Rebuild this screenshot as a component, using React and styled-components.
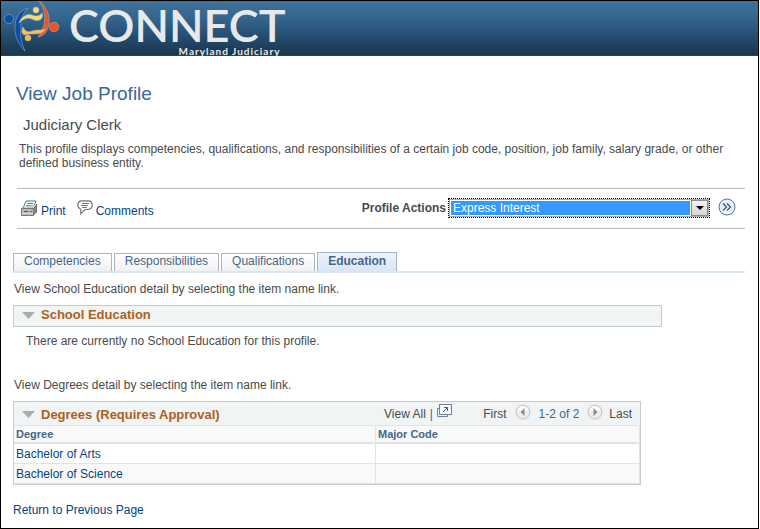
import React, { useState } from 'react';
import styled, { createGlobalStyle } from 'styled-components';

const GlobalStyle = createGlobalStyle`
  * {
    box-sizing: border-box;
  }

  body {
    margin: 0;
    background: #fff;
    color: #4a4a4a;
    font-family: "Liberation Sans", Arial, sans-serif;
    font-size: 12px;
    line-height: 14px;
  }
`;

const tabs = ['Competencies', 'Responsibilities', 'Qualifications', 'Education'];

const degrees = [
  { name: 'Bachelor of Arts', majorCode: '' },
  { name: 'Bachelor of Science', majorCode: '' },
];

const LogoMark = () => (
  <svg width="60" height="54" viewBox="0 0 60 54" aria-hidden="true">
    <g stroke="#a9b8c6" strokeWidth="0.5">
      <path d="M25 7C16 10 12 17 12 26C12 36 16 44 22 50C18 41 17 35 18 29C17 20 19 13 25 7Z" fill="#0b4ea2" />
      <circle cx="6" cy="18" r="4.600" fill="#0b4ea2" />
      <path d="M36 0C43 5 47 14 46 22C45 29 42 35 35 36C38 32 39 28 41 24C43 15 41 6 36 0Z" fill="#ef5323" />
      <circle cx="51" cy="26" r="4.800" fill="#ef5323" />
      <path d="M16 22C18 16 24 12 29 14C33 16 37 15 39 12C41 17 37 21 31 19C26 16 21 17 16 22Z" fill="#fcd772" />
      <circle cx="33" cy="9" r="3" fill="#fcd772" />
      <path d="M43 28C38 30 34 28 29 30C25 32 22 30 20 26C18 30 19 34 22 34C29 31 37 36 43 28Z" fill="#fbc04c" />
      <circle cx="25" cy="37" r="3" fill="#fbb73c" />
    </g>
  </svg>
);

const PrintIcon = () => (
  <svg width="17" height="17" viewBox="0 0 17 17" aria-hidden="true">
    <path d="M5 1H15L12 8H2Z" fill="#f4fbfd" stroke="#35829c" />
    <path d="M6.500 3.500H12M5.500 5.500H11" stroke="#35829c" />
    <path d="M2 7L.8 9H12L15.500 5.500V4" fill="#ccc" stroke="#777" />
    <path d="M12 9L15.500 5.500V12L12 15.500Z" fill="#8a8a8a" stroke="#666" />
    <path d="M.5 8.500H12.500V15.500H.5Z" fill="#b9b9b9" stroke="#777" />
    <path d="M3 11.500H7" stroke="#555" />
    <path d="M9 11.500H11" stroke="#d4402c" />
    <path d="M1 13.500H12" stroke="#ddd" />
  </svg>
);

const CommentsIcon = () => (
  <svg width="16" height="15" viewBox="0 0 16 15" aria-hidden="true">
    <path
      d="M4 .8H12Q15.200 1.500 15.200 5Q15.200 9 11 9.500H8L3.800 13.800V9.300Q.8 8 .8 5Q.8 1.500 4 .8Z"
      fill="#fff"
      stroke="#777"
      strokeWidth="1.200"
    />
    <path d="M5 3.500H12M4 5.500H11M5 7.500H10" stroke="#777" />
  </svg>
);

const GoIcon = () => (
  <svg width="18" height="18" viewBox="0 0 18 18" aria-hidden="true">
    <circle cx="9" cy="9" r="8" fill="#e6effb" stroke="#5d7397" />
    <path d="M5 5.500L8.500 9L5 12.500M9 5.500L12.500 9L9 12.500" fill="none" stroke="#3d5a89" strokeWidth="1.300" />
  </svg>
);

const TriangleIcon = () => (
  <svg width="13" height="7" viewBox="0 0 13 7" aria-hidden="true">
    <path d="M0 0H13L6.500 7Z" fill="#acacac" />
  </svg>
);

const PopupIcon = () => (
  <svg width="15" height="13" viewBox="0 0 15 13" aria-hidden="true">
    <path d="M2.500 4.500H.5V12.500H10.500V10.500" fill="none" stroke="#6b839f" />
    <rect x="2.500" y=".5" width="12" height="10" fill="#f5f9fc" stroke="#6b839f" />
    <path d="M6 8L10.500 3.500M7 3.500H10.500V7" fill="none" stroke="#4d5c6e" />
  </svg>
);

const PagerIcon = ({ next }) => (
  <svg width="16" height="16" viewBox="0 0 16 16" aria-hidden="true">
    <circle cx="8" cy="8" r="7" fill="#ececec" stroke="#c3c3c3" />
    <path d="M2 7Q8 -3 14 7Z" fill="#fafafa" />
    <path d={next ? 'M6.500 4L10.500 8L6.500 12Z' : 'M9.500 4L5.500 8L9.500 12Z'} fill="#8b8b8b" />
  </svg>
);

function App() {
  const [activeTab, setActiveTab] = useState('Education');

  return (
    <Page>
      <GlobalStyle />
      <Banner>
        <LogoMark />
        <Brand>
          <BrandName>CONNECT</BrandName>
          <BrandTag>Maryland Judiciary</BrandTag>
        </Brand>
      </Banner>

      <Content>
        <Title>View Job Profile</Title>
        <Subtitle>Judiciary Clerk</Subtitle>
        <Description>
          This profile displays competencies, qualifications, and responsibilities of a certain job code, position, job
          family, salary grade, or other defined business entity.
        </Description>

        <Toolbar>
          <ToolLinks>
            <IconLink href="#print">
              <PrintIcon />
              <span>Print</span>
            </IconLink>
            <IconLink href="#comments">
              <CommentsIcon />
              <span>Comments</span>
            </IconLink>
          </ToolLinks>
          <Actions>
            <ActionLabel htmlFor="profile-actions">Profile Actions</ActionLabel>
            <SelectBox>
              <ActionSelect id="profile-actions">
                <option>Express Interest</option>
              </ActionSelect>
              <SelectArrow>
                <svg width="8" height="4" viewBox="0 0 8 4" aria-hidden="true">
                  <path d="M0 0H8L4 4Z" fill="#000" />
                </svg>
              </SelectArrow>
            </SelectBox>
            <IconButton type="button" aria-label="Go">
              <GoIcon />
            </IconButton>
          </Actions>
        </Toolbar>

        <TabBar>
          {tabs.map((tab) => (
            <Tab key={tab} type="button" $active={tab === activeTab} onClick={() => setActiveTab(tab)}>
              {tab}
            </Tab>
          ))}
        </TabBar>

        <Hint>View School Education detail by selecting the item name link.</Hint>
        <SchoolHeader>
          <SectionTitle>
            <TriangleIcon />
            School Education
          </SectionTitle>
        </SchoolHeader>
        <EmptyText>There are currently no School Education for this profile.</EmptyText>

        <Hint>View Degrees detail by selecting the item name link.</Hint>
        <DegreesPanel>
          <DegreesHeader>
            <SectionTitle>
              <TriangleIcon />
              Degrees (Requires Approval)
            </SectionTitle>
            <GridTools>
              <span>View All</span>
              <Separator>|</Separator>
              <IconButton type="button" aria-label="Zoom">
                <PopupIcon />
              </IconButton>
            </GridTools>
            <Pager>
              <span>First</span>
              <IconButton type="button" aria-label="Previous">
                <PagerIcon />
              </IconButton>
              <PageRange>1-2 of 2</PageRange>
              <IconButton type="button" aria-label="Next">
                <PagerIcon next />
              </IconButton>
              <span>Last</span>
            </Pager>
          </DegreesHeader>
          <Table>
            <thead>
              <tr>
                <HeadCell $wide>Degree</HeadCell>
                <HeadCell>Major Code</HeadCell>
              </tr>
            </thead>
            <tbody>
              {degrees.map((degree) => (
                <Row key={degree.name}>
                  <Cell>
                    <TextLink href="#degree">{degree.name}</TextLink>
                  </Cell>
                  <Cell>{degree.majorCode}</Cell>
                </Row>
              ))}
            </tbody>
          </Table>
        </DegreesPanel>

        <TextLink href="#back">Return to Previous Page</TextLink>
      </Content>
    </Page>
  );
}

const Page = styled.div`
  min-height: 100vh;
  margin-right: 1px;
  border: 1px solid #000;
`;

const Banner = styled.header`
  display: flex;
  gap: 6px;
  height: 55px;
  padding-left: 2px;
  border-bottom: 1px solid #23455f;
  background: linear-gradient(#3f739c, #32638b 35%, #264d70 65%, #18364f);
`;

const Brand = styled.div`
  display: flex;
  flex-direction: column;
  align-items: flex-end;
  padding-top: 4px;
  color: #e9e9ea;
  font-family: Lato, sans-serif;
`;

const BrandName = styled.div`
  font-size: 45px;
  font-weight: 600;
  line-height: 40px;
`;

const BrandTag = styled.div`
  padding-right: 5px;
  font-size: 10px;
  font-weight: 700;
  line-height: 12px;
  letter-spacing: 1px;
`;

const Content = styled.main`
  padding: 26px 13px 0 12px;
`;

const Title = styled.h1`
  margin: 0 0 10px 3px;
  color: #3d6696;
  font-size: 19px;
  font-weight: 400;
  line-height: 24px;
`;

const Subtitle = styled.h2`
  margin: 0 0 8px 10px;
  font-size: 15px;
  font-weight: 400;
  line-height: 18px;
`;

const Description = styled.p`
  margin: 0 16px 18px 6px;
`;

const Toolbar = styled.div`
  display: flex;
  justify-content: space-between;
  height: 41px;
  margin: 0 0 23px 4px;
  padding: 9px 9px 0 4px;
  border-top: 1px solid #b8b8b8;
  border-bottom: 1px solid #b8b8b8;
`;

const ToolLinks = styled.div`
  display: flex;
  align-items: flex-start;
  gap: 11px;
  padding-top: 2px;
`;

const TextLink = styled.a`
  color: #054383;
  text-decoration: none;
`;

const IconLink = styled(TextLink)`
  display: flex;
  gap: 3px;

  span {
    padding-top: 4px;
  }
`;

const Actions = styled.div`
  display: flex;
  align-items: flex-start;
`;

const ActionLabel = styled.label`
  padding: 3px 2px 0 0;
  font-weight: 700;
`;

const SelectBox = styled.div`
  position: relative;
  width: 262px;
  height: 20px;
  margin-right: 8px;
  border: 1px dotted #000;
`;

const ActionSelect = styled.select`
  appearance: none;
  display: block;
  width: 100%;
  height: 18px;
  padding: 0 20px 0 3px;
  border: 1px solid #aaa;
  border-radius: 0;
  outline: none;
  background: #39f;
  box-shadow: inset 0 0 0 1px #fff;
  color: #fff;
  font: inherit;
  line-height: 14px;
`;

const SelectArrow = styled.span`
  position: absolute;
  top: 1px;
  right: 1px;
  display: flex;
  align-items: center;
  justify-content: center;
  width: 17px;
  height: 16px;
  border: 1px solid #8d8d8d;
  background: linear-gradient(#f3f3f3, #d5d5d5);
  box-shadow: -1px 0 0 #fff;
  pointer-events: none;
`;

const IconButton = styled.button`
  display: flex;
  padding: 0;
  border: 0;
  background: none;
`;

const TabBar = styled.nav`
  display: flex;
  align-items: flex-end;
  gap: 2px;
  height: 21px;
  margin-bottom: 9px;
  border-bottom: 2px solid #dbe6f4;
`;

const Tab = styled.button`
  height: ${(props) => (props.$active ? '19px' : '18px')};
  padding: 0 10px 3px;
  border: 1px solid #a9b3c6;
  border-bottom: 0;
  background: ${(props) => (props.$active ? 'linear-gradient(#eef3fd, #dae6f5)' : 'linear-gradient(#fff, #f1f1f1)')};
  color: #456688;
  font: inherit;
  font-weight: ${(props) => (props.$active ? 700 : 400)};
`;

const Hint = styled.p`
  margin: 0 0 9px 1px;
`;

const SchoolHeader = styled.div`
  display: flex;
  align-items: flex-start;
  max-width: 649px;
  height: 22px;
  padding: 1px 0 0 8px;
  border: 1px solid #c5cad1;
  background: #f0f4f5;
`;

const SectionTitle = styled.h3`
  display: flex;
  align-items: center;
  gap: 6px;
  margin: 0;
  color: #af5f1d;
  font-size: 13px;
  line-height: 16px;
`;

const EmptyText = styled.p`
  margin: 7px 0 30px 13px;
`;

const DegreesPanel = styled.section`
  max-width: 628px;
  margin-bottom: 18px;
  border: 1px solid #c5cad1;
`;

const DegreesHeader = styled.div`
  display: grid;
  grid-template-columns: 362px 1fr auto;
  height: 24px;
  padding: 2px 8px 0 8px;
  border-bottom: 1px solid #e1e3e4;
  background: #f0f4f5;
`;

const GridTools = styled.div`
  display: flex;
  align-items: flex-start;
  gap: 4px;
  line-height: 20px;
`;

const Separator = styled.span`
  color: #456688;
`;

const Pager = styled.div`
  display: flex;
  align-items: flex-start;
  gap: 8px;
  line-height: 20px;

  button + span:last-child {
    margin-left: -2px;
  }
`;

const PageRange = styled.span`
  color: #456688;
`;

const Table = styled.table`
  width: 100%;
  border-spacing: 0;
  table-layout: fixed;
`;

const HeadCell = styled.th`
  width: ${(props) => (props.$wide ? '362px' : 'auto')};
  height: 18px;
  padding: 0 2px;
  border-right: 1px solid #e3e3e3;
  border-bottom: 2px solid #e3e3e3;
  background: #f9f9f9;
  color: #456688;
  font-size: 11px;
  text-align: left;
`;

const Row = styled.tr`
  &:nth-child(even) {
    background: #f9f9f9;
  }
`;

const Cell = styled.td`
  height: 20px;
  padding: 0 2px;
  border-right: 1px solid #e3e3e3;
  border-bottom: 1px solid #e3e3e3;
`;

export default App;
